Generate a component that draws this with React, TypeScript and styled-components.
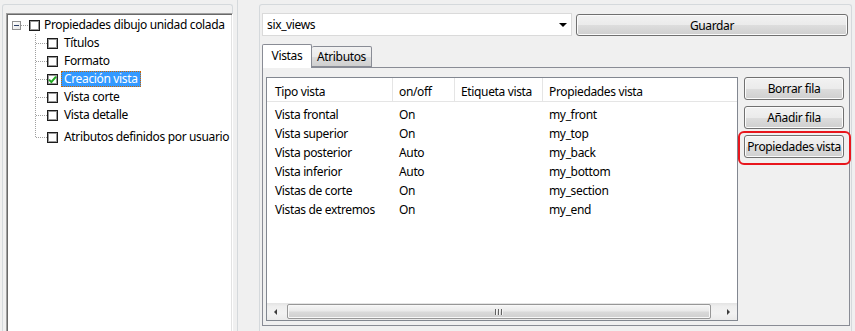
import React from 'react';
import styled, { createGlobalStyle } from 'styled-components';

const GlobalStyle = createGlobalStyle`
  html, body {
    margin: 0;
    padding: 0;
  }

  body {
    background: #f0f0f0;
    font-family: 'Noto Sans', 'Open Sans', sans-serif;
    font-size: 12px;
    letter-spacing: -0.35px;
    color: #000;
    overflow: hidden;
  }
`;

const Window = styled.div`
  display: flex;
  width: 855px;
  height: 331px;
  overflow: hidden;
  background: #f0f0f0;
`;

/* ---------- left: tree ---------- */

const LeftPane = styled.div`
  width: 231px;
  margin: 4px 0 0 2px;
  padding: 8px 2px 0 3px;
  box-sizing: border-box;
  border: 1px solid #d5d9dc;
  border-bottom: none;
  border-radius: 3px 3px 0 0;
  display: flex;
`;

const TreeBox = styled.div`
  flex: 1;
  background: #fff;
  border-top: 1px solid #a0a0a0;
  border-left: 1px solid #a0a0a0;
  border-right: 1px solid #fff;
  box-shadow: inset 1px 1px 0 #696969, inset -1px 0 0 #e3e3e3;
  padding: 2px 0 0 1px;
`;

const TreeRow = styled.div`
  display: flex;
  align-items: center;
  height: 18px;
  white-space: nowrap;
`;

const Expander = styled.span`
  width: 9px;
  height: 9px;
  margin-left: 4px;
  box-sizing: border-box;
  border: 1px solid #919191;
  background: linear-gradient(135deg, #ffffff 0%, #e4e4e4 100%);
  display: flex;
  align-items: center;
  justify-content: center;

  &::after {
    content: "";
    width: 5px;
    height: 1px;
    background: #2b3f66;
  }
`;

const CheckBox = styled.span<{ $low?: boolean }>`
  width: 11px;
  height: 11px;
  flex: none;
  box-sizing: border-box;
  border: 1px solid #1c1c1c;
  box-shadow: inset 0 0 0 1px #9a9a9a;
  background: #fff;
  display: flex;
  align-items: center;
  justify-content: center;
  ${(p) => (p.$low ? 'align-self: flex-end; margin-bottom: 3px;' : '')}
`;

const TreeLabel = styled.span<{ $selected?: boolean; $gap: number; $low?: boolean }>`
  margin-left: ${(p) => p.$gap}px;
  padding: 0 2px;
  line-height: 14px;
  border: 1px dotted ${(p) => (p.$selected ? '#cc6600' : 'transparent')};
  background: ${(p) => (p.$selected ? '#3399ff' : 'transparent')};
  color: ${(p) => (p.$selected ? '#fff' : '#000')};
  ${(p) => (p.$low ? 'align-self: flex-end; margin-bottom: 1px;' : '')}
`;

const Check = () => (
  <svg width="9" height="9" viewBox="0 0 9 9">
    <path d="M1 4.6 L3.4 7 L8 1.6" fill="none" stroke="#21a821" strokeWidth="2" />
  </svg>
);

const Connector = ({ height, last }: { height: number; last?: boolean }) => {
  const mid = height - 9;
  return (
    <svg width="39" height={height} style={{ flex: 'none' }}>
      <line x1="27.5" y1="0" x2="27.5" y2={last ? mid : height} stroke="#a0a0a0" strokeDasharray="1 1" />
      <line x1="28" y1={mid + 0.5} x2="39" y2={mid + 0.5} stroke="#a0a0a0" strokeDasharray="1 1" />
    </svg>
  );
};

const treeItems = [
  { label: 'Títulos' },
  { label: 'Formato' },
  { label: 'Creación vista', checked: true, selected: true },
  { label: 'Vista corte' },
  { label: 'Vista detalle' },
  { label: 'Atributos definidos por usuario', low: true },
];

/* ---------- right: editor ---------- */

const RightPane = styled.div`
  flex: 1;
  margin-left: 4px;
  border-left: 1px solid #d5d9dc;
  padding: 4px 3px 0 21px;
  display: flex;
`;

const GroupFrame = styled.div`
  flex: 1;
  border: 1px solid #d5d9dc;
  border-bottom: none;
  border-radius: 3px 3px 0 0;
  padding: 8px 1px 0 2px;
  display: flex;
  flex-direction: column;
`;

const TopBar = styled.div`
  display: flex;
  align-items: flex-start;
  gap: 4px;
  height: 23px;
  margin-right: 2px;
`;

const Combo = styled.div`
  width: 310px;
  height: 23px;
  box-sizing: border-box;
  border: 1px solid #dadada;
  background: #fff;
  display: flex;
  align-items: center;
  justify-content: space-between;
  padding: 0 4px 0 4px;
`;

const ComboArrow = styled.span`
  width: 0;
  height: 0;
  border-left: 4px solid transparent;
  border-right: 4px solid transparent;
  border-top: 4px solid #000;
`;

const Button = styled.button<{ $height?: number }>`
  height: ${(p) => p.$height || 23}px;
  box-sizing: border-box;
  border: 1px solid #707070;
  border-radius: 3px;
  background: linear-gradient(#f2f2f2 0%, #ebebeb 50%, #dddddd 51%, #cfcfcf 100%);
  box-shadow: inset 0 0 0 1px #fbfbfb;
  font: inherit;
  letter-spacing: inherit;
  color: #000;
  padding: 0;
  white-space: nowrap;
`;

const SaveButton = styled(Button)`
  flex: 1;
  margin-top: 1px;
`;

const TabStrip = styled.div`
  display: flex;
  align-items: flex-end;
  height: 23px;
  margin-top: 8px;
`;

const Tab = styled.div<{ $active?: boolean; $width: number }>`
  width: ${(p) => p.$width}px;
  height: ${(p) => (p.$active ? 24 : 21)}px;
  margin-bottom: ${(p) => (p.$active ? -1 : 0)}px;
  box-sizing: border-box;
  border: 1px solid #898c95;
  border-bottom: ${(p) => (p.$active ? 'none' : '1px solid #898c95')};
  border-left: ${(p) => (p.$active ? '1px solid #898c95' : 'none')};
  border-radius: 2px 2px 0 0;
  background: ${(p) => (p.$active ? '#fff' : 'linear-gradient(#f2f2f2 0%, #ebebeb 50%, #dddddd 51%, #cfcfcf 100%)')};
  position: relative;
  z-index: ${(p) => (p.$active ? 1 : 0)};
  display: flex;
  align-items: center;
  justify-content: center;
  padding-bottom: ${(p) => (p.$active ? 2 : 0)}px;
`;

const TabPage = styled.div`
  height: 259px;
  box-sizing: border-box;
  border: 1px solid #898c95;
  background: #f0f0f0;
  padding: 9px 5px 0 3px;
  display: flex;
  align-items: flex-start;
  gap: 6px;
`;

const ListView = styled.div`
  width: 472px;
  height: 244px;
  box-sizing: border-box;
  border: 1px solid #828790;
  background: #fff;
  display: flex;
  flex-direction: column;
`;

const HeaderRow = styled.div`
  display: flex;
  height: 24px;
  box-sizing: border-box;
  border-bottom: 1px solid #e5e5e5;
`;

const HeaderCell = styled.div<{ $width?: number; $pad: number }>`
  ${(p) => (p.$width ? `width: ${p.$width}px;` : 'flex: 1;')}
  box-sizing: border-box;
  padding: 3px 0 0 ${(p) => p.$pad}px;
  border-right: ${(p) => (p.$width ? '1px solid #e5e5e5' : 'none')};
  display: flex;
  align-items: center;
  white-space: nowrap;
`;

const Body = styled.div`
  flex: 1;
  padding-top: 3px;
`;

const DataRow = styled.div`
  display: flex;
  height: 19px;
  align-items: center;
`;

const Cell = styled.div<{ $width?: number; $pad: number }>`
  ${(p) => (p.$width ? `width: ${p.$width}px;` : 'flex: 1;')}
  box-sizing: border-box;
  padding-left: ${(p) => p.$pad}px;
  white-space: nowrap;
`;

const ScrollBar = styled.div`
  height: 17px;
  display: flex;
  align-items: center;
  background: linear-gradient(#e3e3e3 0%, #eeeeee 20%, #f2f2f2 60%, #eaeaea 100%);
`;

const ScrollArrow = styled.div<{ $dir: 'left' | 'right' }>`
  width: 17px;
  height: 17px;
  display: flex;
  align-items: center;
  justify-content: center;

  &::after {
    content: "";
    width: 0;
    height: 0;
    border-top: 3px solid transparent;
    border-bottom: 3px solid transparent;
    ${(p) => (p.$dir === 'left' ? 'border-right: 3px solid #3c3c3c;' : 'border-left: 3px solid #3c3c3c;')}
  }
`;

const Thumb = styled.div`
  width: 424px;
  height: 15px;
  margin-left: 3px;
  box-sizing: border-box;
  border: 1px solid #979797;
  border-radius: 2px;
  background: linear-gradient(#f6f6f6 0%, #eaeaea 45%, #d9d9d9 55%, #cfcfcf 100%);
  box-shadow: inset 0 0 0 1px #f8f8f8;
  display: flex;
  align-items: center;
  justify-content: center;
  gap: 1px;
`;

const Grip = styled.span`
  width: 1px;
  height: 6px;
  background: #626262;
  box-shadow: 1px 0 0 #f4f4f4;
  margin-right: 1px;
`;

const Track = styled.div`
  flex: 1;
`;

const ButtonColumn = styled.div`
  width: 100px;
  display: flex;
  flex-direction: column;
  gap: 6px;
`;

const Highlight = styled.div`
  position: relative;
  display: flex;
  flex-direction: column;

  &::after {
    content: "";
    position: absolute;
    top: -4px;
    left: -6px;
    right: -7px;
    bottom: -7px;
    border: 2px solid #e8161d;
    border-radius: 6px;
    pointer-events: none;
  }
`;

const columns = [
  { title: 'Tipo vista', width: 126, pad: 8 },
  { title: 'on/off', width: 62, pad: 6 },
  { title: 'Etiqueta vista', width: 88, pad: 6 },
  { title: 'Propiedades vista', pad: 6 },
];

const rows = [
  ['Vista frontal', 'On', '', 'my_front'],
  ['Vista superior', 'On', '', 'my_top'],
  ['Vista posterior', 'Auto', '', 'my_back'],
  ['Vista inferior', 'Auto', '', 'my_bottom'],
  ['Vistas de corte', 'On', '', 'my_section'],
  ['Vistas de extremos', 'On', '', 'my_end'],
];

const App: React.FC = () => (
  <>
    <GlobalStyle />
    <Window>
      <LeftPane>
        <TreeBox>
          <TreeRow>
            <Expander />
            <svg width="8" height="18" style={{ flex: 'none' }}>
              <line x1="0" y1="9.5" x2="8" y2="9.5" stroke="#a0a0a0" strokeDasharray="1 1" />
            </svg>
            <CheckBox />
            <TreeLabel $gap={1}>Propiedades dibujo unidad colada</TreeLabel>
          </TreeRow>
          {treeItems.map((item, i) => (
            <TreeRow key={item.label} style={item.low ? { height: 22 } : undefined}>
              <Connector height={item.low ? 22 : 18} last={i === treeItems.length - 1} />
              <CheckBox $low={item.low}>{item.checked && <Check />}</CheckBox>
              <TreeLabel $gap={3} $selected={item.selected} $low={item.low}>
                {item.label}
              </TreeLabel>
            </TreeRow>
          ))}
        </TreeBox>
      </LeftPane>

      <RightPane>
        <GroupFrame>
          <TopBar>
            <Combo>
              <span>six_views</span>
              <ComboArrow />
            </Combo>
            <SaveButton $height={22}>Guardar</SaveButton>
          </TopBar>

          <TabStrip>
            <Tab $active $width={50}>Vistas</Tab>
            <Tab $width={60}>Atributos</Tab>
          </TabStrip>

          <TabPage>
            <ListView>
              <HeaderRow>
                {columns.map((c) => (
                  <HeaderCell key={c.title} $width={c.width} $pad={c.pad}>
                    {c.title}
                  </HeaderCell>
                ))}
              </HeaderRow>
              <Body>
                {rows.map((r) => (
                  <DataRow key={r[0]}>
                    {r.map((v, j) => (
                      <Cell key={j} $width={columns[j].width} $pad={columns[j].pad}>
                        {v}
                      </Cell>
                    ))}
                  </DataRow>
                ))}
              </Body>
              <ScrollBar>
                <ScrollArrow $dir="left" />
                <Thumb>
                  <Grip />
                  <Grip />
                  <Grip />
                </Thumb>
                <Track />
                <ScrollArrow $dir="right" />
              </ScrollBar>
            </ListView>

            <ButtonColumn>
              <Button>Borrar fila</Button>
              <Button>Añadir fila</Button>
              <Highlight>
                <Button>Propiedades vista</Button>
              </Highlight>
            </ButtonColumn>
          </TabPage>
        </GroupFrame>
      </RightPane>
    </Window>
  </>
);

export default App;
